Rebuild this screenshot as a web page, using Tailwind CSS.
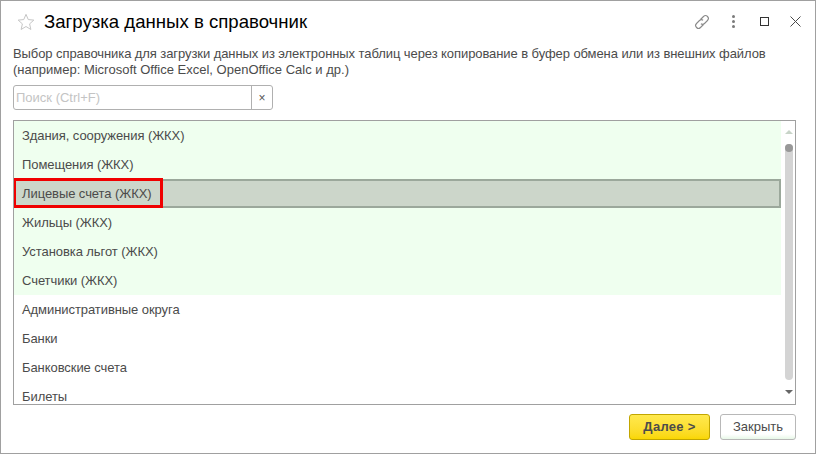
<!DOCTYPE html>
<html lang="ru">
<head>
    <meta charset="UTF-8">
    <title>Загрузка данных в справочник</title>
    <script src="https://cdn.jsdelivr.net/npm/@tailwindcss/browser@4"></script>
</head>
<body class="bg-white">
    <div class="w-[816px] h-[454px] border border-[#a0a0a0] bg-white font-['Liberation_Sans',Arial,sans-serif] text-[#4b4b4b] flex flex-col overflow-hidden">
        <!-- header -->
        <div class="h-[42px] flex items-center pl-[16px] pr-[14px] shrink-0">
            <svg width="18" height="18" viewBox="0 0 20 20" class="shrink-0">
                <path d="M10 1.500l2.500 5.800 6.200.6-4.700 4.200 1.400 6.200L10 15l-5.400 3.300L6 12.100l-4.700-4.200 6.200-.6z" fill="none" stroke="#c4c4c4" stroke-width="1.100"/>
            </svg>
            <h1 class="ml-[9px] text-[18.6px] leading-none text-black">Загрузка данных в справочник</h1>
            <div class="ml-auto mb-[1px] flex items-center">
                <svg width="18" height="18" viewBox="0 0 18 18" class="mr-[21px]" fill="none" stroke="#8a8a8a" stroke-width="1.100">
                    <path d="M7.500 6.500l3-3a2.800 2.800 0 0 1 4 4l-3 3a2.800 2.800 0 0 1-3.600.3"/>
                    <path d="M10.500 11.500l-3 3a2.800 2.800 0 0 1-4-4l3-3a2.800 2.800 0 0 1 3.600-.3"/>
                </svg>
                <div class="flex flex-col gap-[2px] mr-[25px]">
                    <span class="w-[3px] h-[3px] rounded-full bg-[#7a7a7a]"></span>
                    <span class="w-[3px] h-[3px] rounded-full bg-[#7a7a7a]"></span>
                    <span class="w-[3px] h-[3px] rounded-full bg-[#7a7a7a]"></span>
                </div>
                <span class="w-[9px] h-[9px] border border-[#333] mr-[21px]"></span>
                <svg width="11" height="11" viewBox="0 0 11 11" stroke="#4a4a4a" stroke-width="1"><path d="M.5.500l10 10M10.500.500l-10 10"/></svg>
            </div>
        </div>
        <!-- description -->
        <p class="ml-[12px] mt-[3px] text-[13px] leading-[16px] whitespace-nowrap">
            <span class="block tracking-[-0.08px]">Выбор справочника для загрузки данных из электронных таблиц через копирование в буфер обмена или из внешних файлов</span>
            <span class="block">(например: Microsoft Office Excel, OpenOffice Calc и др.)</span>
        </p>
        <!-- search -->
        <div class="ml-[12px] mt-[7px] w-[260px] h-[25px] border border-[#b0b0b0] rounded-[3px] flex items-center text-[13px] shrink-0">
            <span class="flex-1 pl-[2px] text-[#c4c4c4]">Поиск (Ctrl+F)</span>
            <span class="w-[21px] h-full border-l border-[#b0b0b0] flex items-center justify-center text-[#555] text-[12px]">×</span>
        </div>
        <!-- list -->
        <div class="ml-[12px] mt-[10px] w-[783px] h-[285px] border border-[#a0a0a0] flex overflow-hidden shrink-0 text-[13px] tracking-[-0.07px]">
            <div class="w-[767px] shrink-0">
                <div class="h-[29px] pl-[8px] flex items-center bg-[#efffef]">Здания, сооружения (ЖКХ)</div>
                <div class="h-[29px] pl-[8px] flex items-center bg-[#efffef]">Помещения (ЖКХ)</div>
                <div class="relative h-[29px] pl-[6px] flex items-center bg-[#ccd6ca] border-2 border-[#9ba89b]">Лицевые счета (ЖКХ)
                    <span class="absolute left-[-3px] top-[-3px] w-[150px] h-[30px] border-[3px] border-[#f00000]"></span>
                </div>
                <div class="h-[29px] pl-[8px] flex items-center bg-[#efffef]">Жильцы (ЖКХ)</div>
                <div class="h-[29px] pl-[8px] flex items-center bg-[#efffef]">Установка льгот (ЖКХ)</div>
                <div class="h-[29px] pl-[8px] flex items-center bg-[#efffef]">Счетчики (ЖКХ)</div>
                <div class="h-[29px] pl-[8px] flex items-center">Административные округа</div>
                <div class="h-[29px] pl-[8px] flex items-center">Банки</div>
                <div class="h-[29px] pl-[8px] flex items-center">Банковские счета</div>
                <div class="h-[29px] pl-[8px] flex items-center">Билеты</div>
            </div>
            <!-- scrollbar -->
            <div class="w-[12px] flex flex-col items-center pt-[9px] ml-[2px]">
                <span class="w-0 h-0 border-x-[4px] border-x-transparent border-b-[4px] border-b-[#c8d4c8]"></span>
                <div class="relative mt-[10px] w-[8px] h-[236px] rounded-full bg-[#d4d4d4]">
                    <span class="absolute top-0 left-0 w-[8px] h-[8px] rounded-full bg-[#989898]"></span>
                </div>
                <span class="mt-[10px] w-0 h-0 border-x-[4px] border-x-transparent border-t-[4px] border-t-[#666]"></span>
            </div>
        </div>
        <!-- footer -->
        <div class="mt-[9px] ml-[628px] flex gap-[10px] text-[13px]">
            <button class="w-[81px] h-[26px] rounded-[3px] border border-[#c2a600] bg-gradient-to-b from-[#ffe94d] to-[#fad700] font-bold tracking-[0.3px] text-[#4b4b4b]">Далее &gt;</button>
            <button class="w-[76px] h-[26px] rounded-[3px] border border-[#b8b8b8] bg-gradient-to-b from-white from-80% to-[#e8f8e8] text-[#4b4b4b]">Закрыть</button>
        </div>
    </div>
</body>
</html>
